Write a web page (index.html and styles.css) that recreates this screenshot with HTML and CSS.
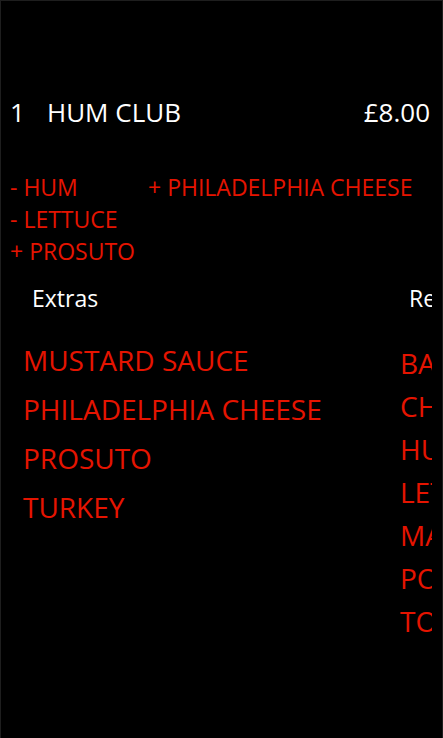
FILE: index.html
```html
<!DOCTYPE html>
<html lang="en">
<head>
  <meta charset="UTF-8">
  <meta name="viewport" content="width=device-width, initial-scale=1.0">
  <title>Order</title>
  <link rel="stylesheet" href="styles.css">
</head>
<body>

<div class="screen">

  <div class="order-line">
    <span class="qty">1</span>
    <span class="name">HUM CLUB</span>
    <span class="price">£8.00</span>
  </div>

  <div class="changes">
    <div class="changes-row">
      <span class="change">- HUM</span>
      <span class="change">+ PHILADELPHIA CHEESE</span>
    </div>
    <div class="changes-row">
      <span class="change">- LETTUCE</span>
    </div>
    <div class="changes-row">
      <span class="change">+ PROSUTO</span>
    </div>
  </div>

  <div class="panorama">
    <div class="section">
      <h3 class="section-title">Extras</h3>
      <ul class="option-list">
        <li>MUSTARD SAUCE</li>
        <li>PHILADELPHIA CHEESE</li>
        <li>PROSUTO</li>
        <li>TURKEY</li>
      </ul>
    </div>
    <div class="section section-second">
      <h3 class="section-title">Remove</h3>
      <ul class="option-list">
        <li>BACON</li>
        <li>CHEDDAR</li>
        <li>HUM</li>
        <li>LETTUCE</li>
        <li>MAYONNAISE</li>
        <li>POTATO</li>
        <li>TOMATO</li>
      </ul>
    </div>
  </div>

</div>

</body>
</html>
```

FILE: styles.css
```css
body {
  margin: 0;
  background-color: #000;
  font-family: "Open Sans", "Noto Sans", sans-serif;
}

.screen {
  height: 737px;
  border: 1px solid #1e1e1e;
  border-bottom: none;
  overflow: hidden;
}

.order-line {
  display: flex;
  margin-top: 93px;
  padding: 0 12px 0 9px;
  color: #fff;
  font-size: 26px;
  line-height: 36px;
}

.qty {
  width: 37px;
}

.price {
  margin-left: auto;
}

.changes {
  margin-top: 41px;
  padding-left: 9px;
  color: #e51400;
  font-size: 23px;
  line-height: 32px;
}

.changes-row {
  display: flex;
}

.changes-row .change:first-child {
  width: 138px;
}

.panorama {
  display: flex;
  width: 431px;
  max-width: 431px;
  overflow: hidden;
  margin-top: 14px;
}

.section {
  flex: 0 0 377px;
  padding-left: 22px;
  box-sizing: border-box;
}

.section-title {
  margin: 0 0 0 9px;
  color: #fff;
  font-size: 23px;
  font-weight: normal;
  line-height: 34px;
}

.option-list {
  list-style: none;
  margin: 21px 0 0;
  padding: 0;
  color: #e51400;
  font-size: 28px;
  line-height: 49px;
  white-space: nowrap;
}

.section-second .option-list {
  margin-top: 27px;
  line-height: 43px;
}
```
